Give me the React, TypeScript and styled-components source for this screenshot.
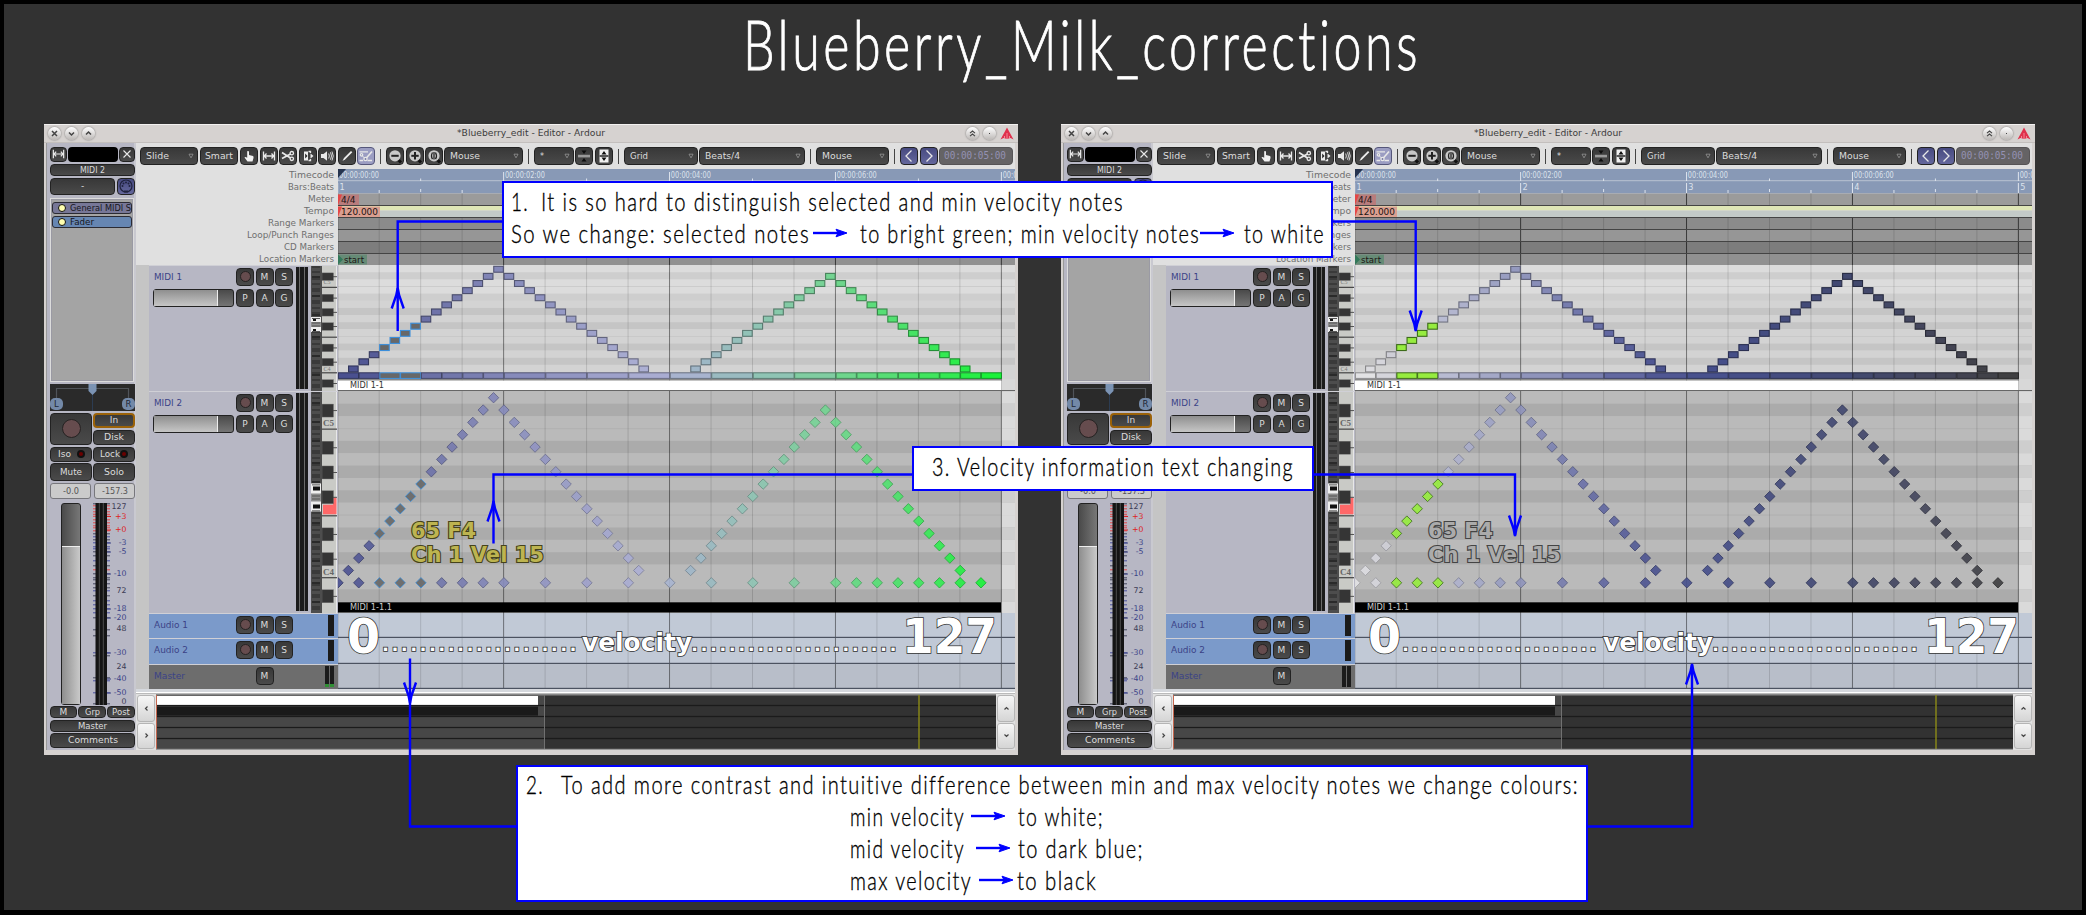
import React, { useLayoutEffect, useRef, useState } from 'react';
import styled, { createGlobalStyle, css } from 'styled-components';

const Global = createGlobalStyle`
  html, body { margin: 0; padding: 0; background: #323232; }
  * { box-sizing: border-box; }
  svg { display: block; }
`;

const UI_FONT = '"DejaVu Sans", sans-serif';
const NOTE_FONT = 'Lato, "Liberation Sans", sans-serif';
const BLUE = '#0000ff';

/* ---------- text that is condensed or widened to a known width ---------- */

const FitBox = styled.span<{ $w: number }>`
  display: block;
  flex: none;
  width: ${p => p.$w}px;
  white-space: pre;
`;
const FitInner = styled.span`
  display: inline-block;
  transform-origin: 0 50%;
`;

function Fit({ w, children }: { w: number; children: string }) {
  const ref = useRef<HTMLSpanElement>(null);
  const [scale, setScale] = useState(1);
  useLayoutEffect(() => {
    const el = ref.current;
    if (!el) return;
    el.style.transform = 'none';
    const natural = el.getBoundingClientRect().width;
    const next = natural ? w / natural : 1;
    el.style.transform = `scaleX(${next})`;
    setScale(next);
  }, [w, children]);
  return (
    <FitBox $w={w}>
      <FitInner ref={ref} style={{ transform: `scaleX(${scale})` }}>{children}</FitInner>
    </FitBox>
  );
}

/* ---------- page ---------- */

const Page = styled.main`
  position: relative;
  width: 2086px;
  height: 915px;
  overflow: hidden;
  background: #323232;
  border: 4px solid #000;
  border-bottom-width: 5px;
  display: flex;
  flex-direction: column;
`;
const Heading = styled.h1`
  margin: 0;
  height: 120px;
  padding: 0 0 0 739px;
  font: 300 69px/80px ${NOTE_FONT};
  font-variant-ligatures: none;
  letter-spacing: 0.07em;
  -webkit-text-stroke: 0.9px #fff;
  color: #fff;
`;
const Windows = styled.div`
  display: flex;
  gap: 43px;
  padding-left: 40px;
`;

/* ---------- window frame ---------- */

const Frame = styled.section`
  position: relative;
  width: 974px;
  height: 631px;
  background: #d6d2d0;
  border-top: 1px solid #f3f1f0;
  font: 9px/12px ${UI_FONT};
  color: #ddd;
  display: flex;
  flex-direction: column;
`;
const TitleBar = styled.header`
  flex: none;
  height: 18px;
  display: flex;
  align-items: center;
  justify-content: space-between;
  padding: 0 4px 1px 4px;
  color: #3c3c3c;
  border-bottom: 1px solid #c3bfbd;
`;
const TitleButtons = styled.div<{ $gap: number }>`
  width: 120px;
  display: flex;
  align-items: center;
  gap: ${p => p.$gap}px;
  &:last-child { justify-content: flex-end; }
`;
const RoundButton = styled.span`
  width: 13px;
  height: 13px;
  border-radius: 50%;
  background: linear-gradient(#fff, #bbb7b5);
  box-shadow: 0 0 2px #666;
  display: grid;
  place-items: center;
`;
const Body = styled.div`
  flex: none;
  height: 607px;
  display: flex;
  padding: 0 3px 0 2px;
`;

/* ---------- shared controls ---------- */

const dark = css`
  background: linear-gradient(#383838, #4a4a4a);
  border: 1px solid #222;
  border-radius: 4px;
  color: #dcdcdc;
`;
const Button = styled.div<{ $w?: number; $h?: number; $ml?: number; $lit?: boolean; $pad?: boolean }>`
  ${dark}
  flex: ${p => (p.$w ? 'none' : '1')};
  width: ${p => (p.$w ? `${p.$w}px` : 'auto')};
  height: ${p => p.$h ?? 18}px;
  margin-left: ${p => p.$ml ?? 0}px;
  display: flex;
  align-items: center;
  justify-content: ${p => (p.$pad ? 'space-between' : 'center')};
  padding: ${p => (p.$pad ? '0 3px 1px 5px' : '0 0 1px')};
  ${p => p.$lit && css`background: #9b9dc2; border-color: #55567a;`}
`;
const NavButton = styled(Button)`
  background: linear-gradient(#474a80, #64679c);
`;
const Separator = styled.i<{ $ml: number }>`
  flex: none;
  width: 1px;
  height: 15px;
  margin-left: ${p => p.$ml}px;
  background: #444;
`;
const RecDot = styled.i<{ $size: number }>`
  width: ${p => p.$size}px;
  height: ${p => p.$size}px;
  border-radius: 50%;
  background: #664c4e;
  border: 1px solid #262222;
`;

/* ---------- mixer strip ---------- */

const Strip = styled.aside`
  flex: none;
  width: 90px;
  padding: 4px 0 0 3px;
  background: #b7b7c4;
  border-left: 1px solid #999;
  border-right: 2px solid #c9c9d0;
  display: flex;
  flex-direction: column;
`;
const StripRow = styled.div<{ $h: number; $mt?: number; $gap?: number }>`
  flex: none;
  height: ${p => p.$h}px;
  margin-top: ${p => p.$mt ?? 0}px;
  width: 85px;
  display: flex;
  gap: ${p => p.$gap ?? 1}px;
`;
const BlackBox = styled.div`
  flex: 1;
  height: 15px;
  border-radius: 4px;
  background: #000;
`;
const Processors = styled.div`
  flex: none;
  width: 84px;
  height: 184px;
  margin-top: 3px;
  padding: 3px 1px;
  background: #a4a4a4;
  border: 1px solid #dcdcdc;
  outline: 1px solid #9a9aa4;
  outline-offset: -2px;
  display: flex;
  flex-direction: column;
  gap: 2px;
`;
const Processor = styled.div<{ $bg: string }>`
  height: 12px;
  border: 1px solid #2b2b33;
  border-radius: 3px;
  background: ${p => p.$bg};
  color: #16161c;
  display: flex;
  align-items: center;
  gap: 4px;
  padding-left: 5px;
  line-height: 10px;
`;
const Led = styled.i<{ $on?: boolean }>`
  flex: none;
  width: 8px;
  height: 8px;
  border-radius: 50%;
  border: ${p => (p.$on ? '1.5px' : '2px')} solid #111;
  background: ${p => (p.$on ? '#ffffb0' : '#6b0000')};
`;
const Halves = styled.div`
  flex: 1;
  display: flex;
  flex-direction: column;
  gap: 2px;
`;
const InButton = styled(Button)`
  border: 2px solid #9b6208;
`;
const Readout = styled.div`
  flex: 1;
  border: 1px solid #77777c;
  border-radius: 3px;
  background: #cbcbcb;
  color: #555;
  display: flex;
  justify-content: center;
  line-height: 14px;
`;
const FaderArea = styled.div`
  flex: none;
  height: 202px;
  margin-top: 4px;
  display: flex;
`;
const VFader = styled.div`
  width: 20px;
  margin-left: 11px;
  border: 1px solid #222;
  border-radius: 3px;
  background: linear-gradient(90deg, #4a4a4a, #777);
  display: flex;
  align-items: flex-end;
`;
const VFaderFill = styled.div`
  width: 100%;
  height: 158px;
  border-top: 1px solid #eee;
  background: linear-gradient(90deg, #8e8e8e, #c9c9c9);
`;

/* ---------- main column ---------- */

const Main = styled.div`
  flex: none;
  width: 879px;
  display: flex;
  flex-direction: column;
  background: #e0e0e0;
`;
const Toolbar = styled.div`
  flex: none;
  height: 26px;
  padding-left: 4px;
  display: flex;
  align-items: center;
`;
const Clock = styled.div`
  ${dark}
  flex: none;
  width: 74px;
  height: 18px;
  margin-left: 1px;
  background: #656365;
  border-color: #565456;
  color: #9492b4;
  padding: 0 0 1px 4px;
  display: flex;
  align-items: center;
  font: 10px/12px "DejaVu Sans Mono", monospace;
`;
const Rulers = styled.div`
  flex: none;
  height: 96px;
  display: flex;
`;
const RulerNames = styled.div`
  width: 202px;
  padding-right: 4px;
  display: flex;
  flex-direction: column;
  align-items: flex-end;
  color: #6f6f6f;
`;
const TrackRow = styled.div<{ $h: number }>`
  flex: none;
  height: ${p => p.$h}px;
  display: flex;
`;
const GroupTab = styled.div`
  flex: none;
  width: 13px;
  background: #c5c5c5;
`;
const Header = styled.div<{ $bg: string }>`
  flex: none;
  width: 189px;
  display: flex;
  background: ${p => p.$bg};
  border-top: 1px solid #d0d0d6;
`;
const Controls = styled.div<{ $top: number }>`
  flex: none;
  width: 147px;
  padding: ${p => p.$top}px 2px 0 5px;
  color: #3b4387;
  display: flex;
  flex-direction: column;
  gap: 3px;
`;
const ControlRow = styled.div`
  display: flex;
  align-items: center;
  height: 18px;
`;
const NameCell = styled.div`
  flex: none;
  width: 82px;
`;
const HFader = styled.div`
  flex: none;
  width: 81px;
  height: 18px;
  margin: 0 2px 0 -1px;
  border: 1px solid #222;
  border-radius: 3px;
  background: linear-gradient(#4a4a4a, #757575);
`;
const HFaderFill = styled.div`
  width: 64px;
  height: 16px;
  border-right: 1px solid #eee;
  background: linear-gradient(#8f8f8f, #c6c6c6);
`;
const Meters = styled.div<{ $n: number; $h: string; $ml: number; $sig?: boolean }>`
  flex: none;
  margin-left: ${p => p.$ml}px;
  margin-top: 1px;
  height: ${p => p.$h};
  display: flex;
  gap: 1px;
  background: #6a6a6a;
  i {
    width: ${p => (p.$n === 3 ? 3.4 : p.$n === 2 ? 4 : 6)}px;
    background: #1b1b1b;
    ${p => p.$sig && css`border-bottom: 3px solid #2f8f33;`}
  }
`;
const Lane = styled.div<{ $bg?: string }>`
  position: relative;
  flex: none;
  width: 677px;
  overflow: hidden;
  background: ${p => p.$bg ?? 'transparent'};
`;
const BottomRule = styled.div`
  flex: none;
  height: 5px;
  background: #fff;
  border-top: 3px solid #d5d8dd;
  border-bottom: 1px solid #bbb;
`;
const SummaryRow = styled.div`
  flex: none;
  height: 56px;
  display: flex;
`;
const Arrows = styled.div`
  flex: none;
  width: 19px;
  padding: 1px 0 1px 1px;
  display: flex;
  flex-direction: column;
  gap: 1px;
`;
const ArrowButton = styled.div`
  flex: 1;
  border: 1px solid #b5b5b5;
  border-radius: 3px;
  background: linear-gradient(#f6f6f6, #d5d5d5);
  display: grid;
  place-items: center;
`;
const Summary = styled.div`
  flex: none;
  width: 840px;
  background: #323232;
`;

/* ---------- legend and annotation overlays ---------- */

const Float = styled.div<{ $x: number; $y: number }>`
  position: absolute;
  left: ${p => p.$x}px;
  top: ${p => p.$y}px;
`;
const Legend = styled(Float)<{ $size: number }>`
  font: bold ${p => p.$size}px/${p => p.$size}px ${UI_FONT};
  color: #fff;
  -webkit-text-stroke: 1.6px #333;
  paint-order: stroke fill;
`;
const Dots = styled(Legend)`
  letter-spacing: 2.3px;
`;
const Info = styled(Float)<{ $fill: string; $stroke: string }>`
  font: bold 20.5px/24px ${UI_FONT};
  color: ${p => p.$fill};
  -webkit-text-stroke: 2.2px ${p => p.$stroke};
  paint-order: stroke fill;
`;
const Callout = styled.div<{ $x: number; $y: number; $w: number; $h: number; $pad: string }>`
  position: absolute;
  left: ${p => p.$x}px;
  top: ${p => p.$y}px;
  width: ${p => p.$w}px;
  height: ${p => p.$h}px;
  padding: ${p => p.$pad};
  background: #fff;
  border: 2.5px solid ${BLUE};
  color: #000;
  font: 300 25.5px/32px ${NOTE_FONT};
  font-variant-ligatures: none;
  letter-spacing: 0.07em;
  -webkit-text-stroke: 0.35px #000;
`;
const Line = styled.div<{ $indent?: number }>`
  display: flex;
  align-items: center;
  height: 32px;
  padding-left: ${p => p.$indent ?? 0}px;
`;
const Gap = styled.i<{ $w: number }>`
  flex: none;
  width: ${p => p.$w}px;
`;
const Connectors = styled.svg`
  position: absolute;
  left: -4px;
  top: -4px;
`;

/* ---------- data ---------- */

const STEP = 10.37;
const BAR = STEP * 16;
const BLACK_ROWS = [1, 4, 6, 8, 11, 13, 16];
const RISE_1 = Array.from({ length: 15 }, (_, i) => [i + 1, 14 - i]);
const FALL_1 = Array.from({ length: 14 }, (_, i) => [i + 16, i + 1]);
const RISE_2 = Array.from({ length: 14 }, (_, i) => [i + 34, 14 - i]);
const FALL_2 = Array.from({ length: 13 }, (_, i) => [i + 48, i + 2]);
const SLOPES = [...RISE_1, ...FALL_1, ...RISE_2, ...FALL_2];
const BASE = [0, 2, 4, 6, 8, 10, 12, 14, 16, 20, 24, 28, 32, 36, 40, 44, 48, 50, 52, 54, 56, 58, 60, 62];

type Stop = [number, number[]];
interface Theme {
  stops: Stop[];
  selected: string;
  selectedEdge: string;
  infoFill: string;
  infoEdge: string;
  signal: boolean;
  marks: { zero: number; dots1: number; word: number; dots2: number; max: number };
}
const OLD: Theme = {
  stops: [[0, [74, 80, 143]], [8, [107, 112, 166]], [16, [135, 139, 187]], [30, [175, 178, 213]], [34, [160, 182, 200]], [40, [143, 196, 180]], [47, [116, 212, 146]], [54, [76, 226, 106]], [62, [26, 242, 58]]],
  selected: '#686868', selectedEdge: '#3a8edb',
  infoFill: '#bdb450', infoEdge: '#45431c', signal: true,
  marks: { zero: 305, dots1: 339, word: 538, dots2: 648, max: 861 },
};
const NEW: Theme = {
  stops: [[0, [226, 226, 228]], [3, [206, 206, 214]], [8, [184, 187, 210]], [16, [143, 148, 187]], [22, [107, 113, 168]], [29, [75, 83, 143]], [34, [70, 79, 139]], [47, [66, 73, 112]], [55, [68, 70, 90]], [62, [64, 64, 66]]],
  selected: '#96ec3f', selectedEdge: '#3d6b1a',
  infoFill: '#ababab', infoEdge: '#444', signal: false,
  marks: { zero: 309, dots1: 342, word: 541.5, dots2: 652, max: 866 },
};

function shade(stops: Stop[], s: number, k = 1) {
  let i = 0;
  while (i < stops.length - 2 && stops[i + 1][0] <= s) i++;
  const [a, ca] = stops[i];
  const [b, cb] = stops[i + 1];
  const t = Math.min(1, (s - a) / (b - a));
  return `rgb(${ca.map((v, n) => Math.round((v + (cb[n] - v) * t) * k)).join(',')})`;
}

/* ---------- drawings ---------- */

function GridLines({ h, y = 0, soft }: { h: number; y?: number; soft?: boolean }) {
  const lines = [];
  for (let q = 0; q <= 16; q++) {
    const major = q % 4 === 0;
    lines.push(
      <line key={q} x1={(q * BAR) / 4 - 0.3} x2={(q * BAR) / 4 - 0.3} y1={y} y2={y + h}
        stroke="#000" strokeOpacity={major ? (soft ? 0.45 : 0.62) : 0.13} strokeWidth={1} />,
    );
  }
  return <g>{lines}</g>;
}

function bandColor(row: number, light: string, darkTone: string) {
  return BLACK_ROWS.includes(row) ? darkTone : light;
}

function RollMidi1({ theme }: { theme: Theme }) {
  const rh = 7.12;
  return (
    <svg width="677" height="126">
      <rect width="677" height="126" fill="#d8d8d8" />
      {Array.from({ length: 16 }, (_, r) => (
        <rect key={r} y={0.2 + r * rh} width="677" height={rh} fill={bandColor(r, r < 5 ? '#dcdcdc' : '#d3d3d3', r < 5 ? '#cecece' : '#c5c5c5')} />
      ))}
      <path d="M0 21.500h677M0 71.500h677" stroke="#c3c3c3" strokeWidth=".6" />
      <GridLines h={126} soft />
      {SLOPES.map(([s, r]) => {
        const sel = s >= 4 && s <= 7;
        return (
          <rect key={s} x={s * STEP + 0.2} y={0.9 + r * rh + 0.4} width={STEP - 0.8} height={rh - 1.2} strokeWidth="1.1"
            fill={sel ? theme.selected : shade(theme.stops, s)} stroke={sel ? theme.selectedEdge : shade(theme.stops, s, 0.62)} />
        );
      })}
      {BASE.map((s, i) => {
        const end = BASE[i + 1] ?? 64;
        const sel = s === 4 || s === 6;
        return (
          <rect key={`b${s}`} x={s * STEP + 0.4} y="107.800" width={(end - s) * STEP - 0.6} height="5.6" strokeWidth="1"
            fill={sel ? theme.selected : shade(theme.stops, s)} stroke={sel ? theme.selectedEdge : shade(theme.stops, s, 0.62)} />
        );
      })}
      <rect y="114.2" width="663.5" height="1.4" fill="#777" />
      <rect y="115.6" width="663.5" height="9.6" fill="#fff" />
      <rect y="125" width="677" height="1" fill="#666" />
      <text x="12" y="123.400" fontSize="8.2" fontFamily="DejaVu Sans" fill="#333" textLength="34" lengthAdjust="spacingAndGlyphs">MIDI 1-1</text>
    </svg>
  );
}

function Diamond({ s, r, theme }: { s: number; r: number; theme: Theme }) {
  const x = s * STEP;
  const y = 6.7 + r * 12.34;
  const sel = s >= 4 && s <= 8;
  return (
    <path d={`M${x} ${y - 5.2}L${x + 5.2} ${y}L${x} ${y + 5.2}L${x - 5.2} ${y}Z`} strokeWidth="1" fillOpacity=".92"
      fill={sel ? theme.selected : shade(theme.stops, s)} stroke={sel ? theme.selectedEdge : shade(theme.stops, s, 0.72)} strokeOpacity=".8" />
  );
}

function RollMidi2({ theme }: { theme: Theme }) {
  const rh = 12.38;
  return (
    <svg width="677" height="222">
      <rect width="677" height="222" fill="#bababa" />
      {Array.from({ length: 17 }, (_, r) => (
        <rect key={r} y={0.3 + r * rh} width="663.5" height={rh} fill={bandColor(r, '#bababa', '#ababab')} />
      ))}
      {Array.from({ length: 18 }, (_, r) => (
        <rect key={`e${r}`} x="663.5" y={0.3 + r * rh} width="14" height={rh} fill={bandColor(r, '#dadada', '#cecece')} />
      ))}
      <path d="M0 37.7h663M0 124h663" stroke="#aeaeae" strokeWidth=".7" />
      <GridLines h={222} soft />
      {SLOPES.map(([s, r]) => <Diamond key={s} s={s} r={r} theme={theme} />)}
      {BASE.map(s => <Diamond key={`b${s}`} s={s} r={15} theme={theme} />)}
      <rect y="211.3" width="663" height="10.2" fill="#000" />
      <text x="12" y="219.3" fontSize="8.2" fontFamily="DejaVu Sans" fill="#ccc" textLength="42" lengthAdjust="spacingAndGlyphs">MIDI 1-1.1</text>
    </svg>
  );
}

function Keyboard({ h, rh, top, hot }: { h: number; rh: number; top: number; hot?: boolean }) {
  return (
    <svg width="16" height={h}>
      <rect width="15" height={h} fill="#c9cac6" />
      <rect x="14" width="1" height={h} fill="#e8e8e8" />
      {hot && <path d={`M1 ${top + 9.1 * rh}h10v-7h3.500v16.500h-13.500z`} fill="#ff6868" />}
      {[3, 10, 15].map(r => <rect key={r} y={top + r * rh - 0.6} width="15" height="1.2" fill="#444" />)}
      {BLACK_ROWS.filter(r => top + r * rh + 6 < h).map(r => (
        <g key={r}>
          <rect y={top + (r + 0.5) * rh - (hot ? 6.5 : 3.8)} width="11.500" height={hot ? 13 : 7.6} fill="#353535" stroke="#777" strokeWidth=".4" />
          <rect x="11" y={top + (r + 0.5) * rh - 0.4} width="4" height=".9" fill="#444" />
        </g>
      ))}
      {hot ? (
        <g fontFamily="Liberation Serif" fontWeight="bold" fontSize="9" fill="#666">
          <text x="1" y={top + 3 * rh - 3}>C5</text>
          <text x="1" y={top + 15 * rh - 3}>C4</text>
        </g>
      ) : (
        <g fontFamily="Liberation Serif" fontSize="6" fill="#777">
          <text x="1.500" y={top + 2.500 * rh}>C5</text>
          <text x="1.500" y={top + 14.7 * rh}>C4</text>
        </g>
      )}
    </svg>
  );
}

function Scroomer({ h, at, span, big }: { h: number; at: number; span: number; big?: boolean }) {
  const ticks = Array.from({ length: Math.floor(h / 4) }, (_, i) => i);
  const grip = big ? 10 : 5;
  return (
    <svg width="11" height={h}>
      <rect width="11" height={h} fill="#4d4d4d" />
      {ticks.map(i => <rect key={i} x="1" y={i * 4 + (i % 3)} width="8" height="2" fill={i % 5 === 2 ? '#2a2a2a' : '#3a3a3a'} />)}
      <rect y={at} width="10" height={span} fill="#8d8d8d" />
      <rect y={at + span / 2 - 2} x="1" width="8" height="1" fill="#555" />
      <rect y={at + span / 2 + 1} x="1" width="8" height="1" fill="#555" />
      {[at, at + span - grip].map((y, i) => (
        <g key={y}>
          <rect y={y} width="10" height={grip} fill="#eee" />
          <rect x="2" y={y + (big ? 3 : 2)} width={big ? 7 : 3} height={big ? 4 : 2} fill="#111" />
          <rect x="1" y={i ? y + grip - 1 : y + 1} width="8" height=".8" fill="#333" />
        </g>
      ))}
    </svg>
  );
}

const CODES = ['00:00:00:00', '00:00:02:00', '00:00:04:00', '00:00:06:00', '00:00:08:00'];

function RulerDrawing() {
  const shades = ['#8b8b8b', '#969696', '#7d7d7d', '#919191'];
  return (
    <svg width="677" height="96">
      <rect width="677" height="24.500" fill="#8899b6" />
      <rect y="11.200" width="677" height="1" fill="#b9c2d2" />
      {CODES.map((c, i) => (
        <g key={i} fontSize="8.2" fill="#dce2ec" fontFamily="DejaVu Sans">
          <rect x={i * BAR - 0.8} y="3" width="1" height="9" fill="#dde3ec" />
          <rect x={i * BAR - 0.8} y="14" width="1" height="10" fill="#dde3ec" />
          <rect x={(i + 0.5) * BAR - 0.8} y="9.500" width="1" height="2.500" fill="#dde3ec" />
          {[1, 2, 3].map(q => <rect key={q} x={(i + q / 4) * BAR - 0.8} y={q === 2 ? 20 : 21} width="1" height="3" fill="#dde3ec" />)}
          <text x={i * BAR + 1} y="8.700" textLength="40" lengthAdjust="spacingAndGlyphs">{c}</text>
          <text x={i * BAR + 1.500} y="20.700">{i + 1}</text>
        </g>
      ))}
      <path d="M0 0H8L0 9Z" fill="#26344f" />
      <rect y="24.500" width="677" height="12.200" fill="#9b9b9b" />
      <rect y="37" width="677" height="4.500" fill="#dfe6b6" />
      <rect y="41.500" width="677" height="6.800" fill="#c3cac8" />
      {shades.map((f, i) => <rect key={f} y={48.500 + i * 12} width="677" height="12" fill={f} />)}
      <GridLines h={12} y={24.500} />
      <GridLines h={48} y={48.500} />
      {[36.5, 48.5, 60.5, 72.5, 84.5].map(y => <rect key={y} y={y - 0.5} width="677" height="1" fill="#444" />)}
      <rect y="25.500" width="21" height="10.500" fill="#b97c7c" />
      <rect y="37.500" width="42" height="10.500" fill="#da9f90" />
      <path d="M0 25.500H4L0 36ZM0 37.500H4L0 48Z" fill="#e54646" />
      <rect y="85.500" width="29" height="10" fill="#668b76" />
      <path d="M0 85.500L5 90.500L0 95.500Z" fill="#33785a" />
      <g fontFamily="DejaVu Sans" fontSize="9" fill="#1c1414">
        <text x="3" y="34" textLength="14.500" lengthAdjust="spacingAndGlyphs">4/4</text>
        <text x="3" y="46" textLength="37" lengthAdjust="spacingAndGlyphs">120.000</text>
        <text x="6" y="93.500" textLength="20" lengthAdjust="spacingAndGlyphs">start</text>
      </g>
    </svg>
  );
}

function SummaryDrawing() {
  return (
    <svg width="840" height="56">
      <rect width="388" height="56" fill="#474747" />
      <rect width="840" height="1.500" fill="#888" />
      <rect y="2" width="382" height="9" fill="#fff" />
      <rect y="12.600" width="382" height="9" fill="#1a1a1a" />
      {[11.5, 22.5, 33.5, 44.5].map(y => <rect key={y} y={y - 0.6} width="840" height="1.200" fill="#1b1b1b" />)}
      <rect x="388" y="1" width="1" height="54" fill="#707070" />
      <rect x="762.300" y="1" width="1.400" height="54" fill="#8c8a16" />
      <rect x="0" y="1" width="1" height="54" fill="#c4664e" />
      <rect y="54.800" width="840" height="1.200" fill="#999" />
    </svg>
  );
}

function Caret() {
  return <svg width="6" height="6" viewBox="0 0 6 6"><path d="M1 1.200H5L3 4.800Z" fill="#333" stroke="#999" strokeWidth=".8" /></svg>;
}

function Icon({ name }: { name: string }) {
  const s = { fill: 'none', stroke: '#e8e8e8', strokeWidth: 1.3 };
  return (
    <svg width="16" height="16" viewBox="0 0 16 16">
      {name === 'hand' && <path d="M6.200 3.300Q7.200 2.500 8 3.500V7L12 8Q12.800 8.500 12.500 10L11.500 13.500H6.500L3.500 9.500Q4 8.300 6.200 9.700Z" fill="#f2f2f2" />}
      {name === 'range' && <path d="M2.500 3.500V12.500M13.500 3.500V12.500M3 8H13M5.500 5.500L3.200 8L5.500 10.500M10.500 5.500L12.800 8L10.500 10.500" {...s} />}
      {name === 'cut' && <g {...s}><circle cx="11.800" cy="5.200" r="1.700" /><circle cx="11.800" cy="10.800" r="1.700" /><path d="M2 4.500L10.500 10M2 10.500L10.500 6" strokeWidth="1.700" /></g>}
      {name === 'stretch' && <g><path d="M4 3.500H8V12.500H4Z" fill="#eee" /><path d="M5.200 5.500L7.500 8L5.200 10.500Z" fill="#222" /><path d="M8.500 3.500H10.500V5M8.500 12.500H10.500V11" {...s} /><path d="M10.500 5.500L13.500 8L10.500 10.500Z" fill="#eee" /></g>}
      {name === 'audition' && <g><path d="M2 6H4.500L8 3.300V12.700L4.500 10H2Z" fill="#e8e8e8" /><path d="M9.700 5.500Q11 8 9.700 10.500M11.500 4.300Q13.500 8 11.500 11.700M13 3.500Q15.500 8 13 12.500" {...s} strokeWidth=".9" /></g>}
      {name === 'draw' && <path d="M3.500 13L5 10L12 3L13.300 4.300L6.300 11.300Z" fill="#eee" />}
      {name === 'edit' && <g {...s}><path d="M1.500 3.800H10M1.500 12.500H5M9.500 12.500H14" /><path d="M7.500 11L14 3.500" strokeWidth="1.600" /><path d="M3.500 7L7.500 11" strokeWidth="1" /><circle cx="7.500" cy="11" r="1.600" fill="#777aa5" /><circle cx="3.500" cy="6.800" r="1.200" fill="#777aa5" /></g>}
      {['out', 'in', 'full'].includes(name) && (
        <g>
          <path d="M10.500 11L14 14.500" stroke="#111" strokeWidth="3" />
          <circle cx="8" cy="7.800" r="5.600" fill="#c9c9c9" />
          {name !== 'full' && <path d="M4.300 7.800H11.700" stroke="#222" strokeWidth="2" />}
          {name === 'in' && <path d="M8 4V11.600" stroke="#222" strokeWidth="2" />}
          {name === 'full' && <path d="M6.500 4.500Q4.500 8 6.500 11.200M9.500 4.500Q11.500 8 9.500 11.200M8 4V11.600" stroke="#222" strokeWidth="1.300" fill="none" />}
        </g>
      )}
      {name === 'shrink' && <g><rect x="2" y="6.800" width="12" height="2.600" fill="#999" /><path d="M5.500 2.500H10.500L8 6ZM5.500 13.500H10.500L8 10Z" fill="#0d0d0d" /></g>}
      {name === 'expand' && <g><rect x="3.500" y="1.500" width="9" height="13" fill="#f0f0f0" /><rect x="3.500" y="7" width="9" height="2" fill="#555" /><path d="M5.500 6.500H10.500L8 3ZM5.500 9.500H10.500L8 13Z" fill="#0d0d0d" /></g>}
      {name === 'close' && <path d="M4 4L12 12M12 4L4 12" {...s} />}
      {name === 'prev' && <path d="M10.500 2.500L5 8L10.500 13.500" {...s} />}
      {name === 'next' && <path d="M5.500 2.500L11 8L5.500 13.500" {...s} />}
      {name === 'midi' && <g><circle cx="8" cy="8" r="6" fill="none" stroke="#20233f" strokeWidth="1.200" /><g fill="#20233f"><circle cx="4.500" cy="8" r="1" /><circle cx="11.500" cy="8" r="1" /><circle cx="8" cy="4.500" r="1" /><circle cx="5.500" cy="5.500" r="1" /><circle cx="10.500" cy="5.500" r="1" /><path d="M6 12.500h4v2h-4z" /></g></g>}
    </svg>
  );
}

function Glyph({ d, w = 1.5, color = '#444' }: { d: string; w?: number; color?: string }) {
  return <svg width="9" height="9" viewBox="0 0 9 9"><path d={d} fill="none" stroke={color} strokeWidth={w} /></svg>;
}

function Panner() {
  return (
    <svg width="85" height="27">
      <rect width="85" height="27" fill="#2a2a2a" />
      <path d="M6.500 16V4.500H78.500V16" fill="none" stroke="#50545a" strokeWidth="1.200" />
      <path d="M42.500 8V27" stroke="#2c3c52" />
      <path d="M38.500 0H46.500V7L42.500 11L38.500 7Z" fill="#7b93b4" />
      <rect y="14" width="13" height="12" rx="5" fill="#7389a8" />
      <rect x="72" y="14" width="13" height="12" rx="5" fill="#7389a8" />
      <g fontFamily="DejaVu Sans" fontSize="8.500" fill="#1c2735"><text x="4" y="23">L</text><text x="75.500" y="23">R</text></g>
    </svg>
  );
}

const SCALE: [string, number, string][] = [
  ['127', 3, '#3c3c55'], ['+3', 12.5, '#d22'], ['+0', 26, '#d22'], ['-3', 39, '#3b4387'], ['-5', 48, '#3b4387'],
  ['-10', 70, '#3b4387'], ['72', 87, '#3c3c55'], ['-18', 105, '#3b4387'], ['-20', 114, '#3b4387'], ['48', 125, '#3c3c55'],
  ['-30', 149, '#3b4387'], ['24', 163, '#3c3c55'], ['-40', 175, '#3b4387'], ['-50', 189, '#3b4387'], ['0', 198, '#3c3c55'],
];

function MeterScale() {
  const ticks = [0, 2, 5, 8, 10.5, 12.5, 16, 19, 22, 24, 27, 30, 33, 36, 39, 43, 45, 48, 52, 57, 62, 66, 70, 74, 76, 80, 84, 87, 92, 97, 101, 105, 109, 114, 126, 132, 149, 152, 174, 177, 189, 200];
  return (
    <svg width="54" height="202">
      {ticks.map(t => {
        const red = (t > 1 && t < 29) || t === 66;
        return <path key={t} d={`M12 ${t + 0.8}h4M26 ${t + 0.8}h3`} stroke={red ? '#e0484c' : t % 2 ? '#4b52a0' : '#44465e'} strokeWidth="1" />;
      })}
      <rect x="14.500" width="11.500" height="202" fill="#141414" />
      <path d="M18.300 0V202M22.300 0V202" stroke="#5c5c5c" strokeWidth=".8" />
      {SCALE.map(([t, y, c]) => (
        <g key={t}>
          {t.length > 1 && /[-+]/.test(t) && <path d={`M26 ${y + 1}h4`} stroke={c} />}
          <text x="45.500" y={y + 3.300} textAnchor="end" fontFamily="DejaVu Sans" fontSize="7.800" fill={c}>{t}</text>
        </g>
      ))}
    </svg>
  );
}

/* ---------- window parts ---------- */

function MixerStrip() {
  return (
    <Strip>
      <StripRow $h={16}>
        <Button $w={17} $h={15}><Icon name="range" /></Button>
        <BlackBox />
        <Button $w={16} $h={15}><Icon name="close" /></Button>
      </StripRow>
      <StripRow $h={12} $mt={1}><Button $h={12}><Fit w={25}>MIDI 2</Fit></Button></StripRow>
      <StripRow $h={17} $mt={2} $gap={2}>
        <Button $h={17}>-</Button>
        <NavButton $w={18} $h={17}><Icon name="midi" /></NavButton>
      </StripRow>
      <Processors>
        <Processor $bg="#777797"><Led $on /><Fit w={61}>General MIDI S</Fit></Processor>
        <Processor $bg="#6686b2"><Led $on /><Fit w={24}>Fader</Fit></Processor>
      </Processors>
      <StripRow $h={27} $mt={2}><Panner /></StripRow>
      <StripRow $h={32} $mt={2}>
        <Button $w={42} $h={32}><RecDot $size={19} /></Button>
        <Halves>
          <InButton $h={15}>In</InButton>
          <Button $h={15}><Fit w={20}>Disk</Fit></Button>
        </Halves>
      </StripRow>
      <StripRow $h={15} $mt={2}>
        <Button $w={42} $h={15}><Fit w={13}>Iso</Fit><Gap $w={6} /><Led /></Button>
        <Button $h={15}><Fit w={20}>Lock</Fit><Led /></Button>
      </StripRow>
      <StripRow $h={18} $mt={1}>
        <Button $w={42}><Fit w={22}>Mute</Fit></Button>
        <Button><Fit w={20}>Solo</Fit></Button>
      </StripRow>
      <StripRow $h={16} $mt={2} $gap={3}><Readout><Fit w={16}>-0.0</Fit></Readout><Readout><Fit w={26}>-157.3</Fit></Readout></StripRow>
      <FaderArea><VFader><VFaderFill /></VFader><MeterScale /></FaderArea>
      <StripRow $h={12} $mt={1}><Button $w={27} $h={12}>M</Button><Button $w={28} $h={12}><Fit w={15}>Grp</Fit></Button><Button $h={12}><Fit w={18}>Post</Fit></Button></StripRow>
      <StripRow $h={12} $mt={2}><Button $h={12}><Fit w={29}>Master</Fit></Button></StripRow>
      <StripRow $h={15} $mt={1}><Button $h={15}><Fit w={50}>Comments</Fit></Button></StripRow>
    </Strip>
  );
}

function Dropdown({ w, ml, tw, label }: { w: number; ml: number; tw: number; label: string }) {
  return <Button $w={w} $ml={ml} $pad><Fit w={tw}>{label}</Fit><Caret /></Button>;
}

function EditorToolbar() {
  return (
    <Toolbar>
      <Dropdown w={58} ml={0} tw={23} label="Slide" />
      <Button $w={38} $ml={2}><Fit w={28}>Smart</Fit></Button>
      {['hand', 'range', 'cut', 'stretch', 'audition', 'draw'].map((n, i) => (
        <Button key={n} $w={18} $ml={i === 0 ? 2 : 1.5}><Icon name={n} /></Button>
      ))}
      <Button $w={18} $ml={1.5} $lit><Icon name="edit" /></Button>
      <Separator $ml={5} />
      <Button $w={18} $ml={5}><Icon name="out" /></Button>
      <Button $w={18} $ml={2}><Icon name="in" /></Button>
      <Button $w={18} $ml={1}><Icon name="full" /></Button>
      <Dropdown w={79} ml={1} tw={30} label="Mouse" />
      <Separator $ml={5} />
      <Dropdown w={40} ml={5} tw={4} label="*" />
      <Button $w={18} $ml={1}><Icon name="shrink" /></Button>
      <Button $w={18} $ml={1.5}><Icon name="expand" /></Button>
      <Separator $ml={5.5} />
      <Dropdown w={74} ml={5} tw={18} label="Grid" />
      <Dropdown w={106} ml={1} tw={35} label="Beats/4" />
      <Separator $ml={5} />
      <Dropdown w={73} ml={5} tw={30} label="Mouse" />
      <Separator $ml={5} />
      <NavButton $w={18} $ml={5}><Icon name="prev" /></NavButton>
      <NavButton $w={18} $ml={2}><Icon name="next" /></NavButton>
      <Clock><Fit w={62}>00:00:05:00</Fit></Clock>
    </Toolbar>
  );
}

const RULER_NAMES: [string, number][] = [
  ['Timecode', 45], ['Bars:Beats', 46], ['Meter', 26], ['Tempo', 30], ['Range Markers', 66],
  ['Loop/Punch Ranges', 87], ['CD Markers', 50], ['Location Markers', 75],
];

function MidiHeader({ name, h, top }: { name: string; h: number; top: number }) {
  const second = name === 'MIDI 2';
  return (
    <Header $bg="#b7b7c4">
      <Controls $top={top}>
        <ControlRow>
          <NameCell><Fit w={28}>{name}</Fit></NameCell>
          <Button $w={18}><RecDot $size={11} /></Button>
          <Button $w={18} $ml={1.5}>M</Button>
          <Button $w={18} $ml={1.5}>S</Button>
        </ControlRow>
        <ControlRow>
          <HFader><HFaderFill /></HFader>
          <Button $w={18}>P</Button>
          <Button $w={18} $ml={1.5}>A</Button>
          <Button $w={18} $ml={1.5}>G</Button>
        </ControlRow>
      </Controls>
      <Meters $n={3} $h={`${h - 4}px`} $ml={0}><i /><i /><i /></Meters>
      <Gap $w={3} />
      <Scroomer h={h - 1} at={second ? 91.5 : 51} span={second ? 28 : 15} big={second} />
      <Keyboard h={h - 1} rh={second ? 12.38 : 7.12} top={second ? 0 : 0} hot={second} />
    </Header>
  );
}

function AudioHeader({ name, w, master, signal }: { name: string; w: number; master?: boolean; signal?: boolean }) {
  return (
    <Header $bg={master ? '#6d6d6d' : '#7b9aca'}>
      <Controls $top={2}>
        <ControlRow>
          <NameCell><Fit w={w}>{name}</Fit></NameCell>
          {master ? <Gap $w={18} /> : <Button $w={18}><RecDot $size={11} /></Button>}
          <Button $w={18} $ml={1.5}>M</Button>
          {!master && <Button $w={18} $ml={1.5}>S</Button>}
        </ControlRow>
      </Controls>
      <Meters $n={master ? 2 : 1} $h="21px" $ml={master ? 29 : 32} $sig={master && signal}><i />{master && <i />}</Meters>
    </Header>
  );
}

function AudioLane({ h, bg }: { h: number; bg: string }) {
  return (
    <Lane $bg={bg}>
      <svg width="677" height={h}>
        <GridLines h={h} soft />
        <rect y={h - 1.2} width="677" height="1.200" fill="#4b5260" />
      </svg>
    </Lane>
  );
}

const dots = (n: number) => '.'.repeat(n);

function EditorWindow({ theme }: { theme: Theme }) {
  const m = theme.marks;
  return (
    <Frame>
      <TitleBar>
        <TitleButtons $gap={4}>
          <RoundButton><Glyph d="M2 2L7 7M7 2L2 7" /></RoundButton>
          <RoundButton><Glyph d="M2 3.500L4.500 6L7 3.500" /></RoundButton>
          <RoundButton><Glyph d="M2 5.500L4.500 3L7 5.500" /></RoundButton>
        </TitleButtons>
        <Fit w={148}>*Blueberry_edit - Editor - Ardour</Fit>
        <TitleButtons $gap={4}>
          <RoundButton><Glyph d="M2 4.200L4.500 2L7 4.200M2 7.200L4.500 5L7 7.200" w={1.1} /></RoundButton>
          <RoundButton><Glyph d="M4 4.500H5" w={1} /></RoundButton>
          <svg width="14" height="13" viewBox="0 0 14 13"><path d="M7 .5L13.500 12.500L10.500 11L7 12L3.500 11L.5 12.500Z" fill="#e0304c" /><path d="M7 6V12M4.500 9V11.500M9.500 9V11.500" stroke="#f6b0b8" strokeWidth=".7" /></svg>
        </TitleButtons>
      </TitleBar>
      <Body>
        <MixerStrip />
        <Main>
          <EditorToolbar />
          <Rulers>
            <RulerNames>{RULER_NAMES.map(([t, w]) => <Fit key={t} w={w}>{t}</Fit>)}</RulerNames>
            <Lane><RulerDrawing /></Lane>
          </Rulers>
          <TrackRow $h={126}><GroupTab /><MidiHeader name="MIDI 1" h={126} top={2} /><Lane><RollMidi1 theme={theme} /></Lane></TrackRow>
          <TrackRow $h={222}><GroupTab /><MidiHeader name="MIDI 2" h={222} top={2} /><Lane><RollMidi2 theme={theme} /></Lane></TrackRow>
          <TrackRow $h={25}><GroupTab /><AudioHeader name="Audio 1" w={34} /><AudioLane h={25} bg="#c1c9d6" /></TrackRow>
          <TrackRow $h={26}><GroupTab /><AudioHeader name="Audio 2" w={34} /><AudioLane h={26} bg="#c1c9d6" /></TrackRow>
          <TrackRow $h={25}><GroupTab /><AudioHeader name="Master" w={31} master signal={theme.signal} /><AudioLane h={25} bg="#b8bec9" /></TrackRow>
          <BottomRule />
          <SummaryRow>
            <Arrows><ArrowButton><Glyph d="M5.500 2.500L3.500 4.500L5.500 6.500" w={1.2} /></ArrowButton><ArrowButton><Glyph d="M3.500 2.500L5.500 4.500L3.500 6.500" w={1.2} /></ArrowButton></Arrows>
            <Gap $w={1} />
            <Summary><SummaryDrawing /></Summary>
            <Arrows><ArrowButton><Glyph d="M2.500 5.500L4.500 3.500L6.500 5.500" w={1.2} /></ArrowButton><ArrowButton><Glyph d="M2.500 3.500L4.500 5.500L6.500 3.500" w={1.2} /></ArrowButton></Arrows>
          </SummaryRow>
        </Main>
      </Body>
      <Info $x={366.5} $y={393.5} $fill={theme.infoFill} $stroke={theme.infoEdge}>
        <Fit w={65}>65 F4</Fit>
        <Fit w={133}>Ch 1 Vel 15</Fit>
      </Info>
      <Legend $x={m.zero - 2} $y={486.5} $size={48}><Fit w={33}>0</Fit></Legend>
      <Dots $x={m.dots1 - 1} $y={511} $size={18}><Fit w={197}>{dots(21)}</Fit></Dots>
      <Legend $x={m.word} $y={505.5} $size={24}><Fit w={110}>velocity</Fit></Legend>
      <Dots $x={m.dots2 - 1} $y={511} $size={18}><Fit w={208}>{dots(22)}</Fit></Dots>
      <Legend $x={m.max - 3} $y={486.5} $size={48}><Fit w={95}>127</Fit></Legend>
    </Frame>
  );
}

function InlineArrow({ w }: { w: number }) {
  return (
    <svg width={w} height="12">
      <path d={`M0 6H${w - 8}`} stroke={BLUE} strokeWidth="2.400" />
      <path d={`M${w} 6L${w - 11} 2.200L${w - 9} 6L${w - 11} 9.800Z`} fill={BLUE} stroke={BLUE} strokeWidth="1" />
    </svg>
  );
}

function Head({ x, y, up }: { x: number; y: number; up?: boolean }) {
  const d = up ? 1 : -1;
  return <path d={`M${x - 6} ${y + d * 20.5}L${x} ${y + d * 3}L${x + 6} ${y + d * 20.5}M${x - 2} ${y + d * 10}L${x} ${y}L${x + 2} ${y + d * 10}`} />;
}

export default function App() {
  return (
    <Page>
      <Global />
      <Heading><Fit w={678}>Blueberry_Milk_corrections</Fit></Heading>
      <Windows>
        <EditorWindow theme={OLD} />
        <EditorWindow theme={NEW} />
      </Windows>
      <Connectors width="2086" height="915" fill="none" stroke={BLUE} strokeWidth="2.400">
        <path d="M502 221.500H397.700V331" />
        <Head x={397.7} y={288} up />
        <path d="M1330 221.500H1415.700V330" />
        <Head x={1415.7} y={331} />
        <path d="M912 474.500H493.500V543.500" />
        <Head x={493.5} y={501} up />
        <path d="M1314 474.500H1515V535" />
        <Head x={1515} y={536} />
        <path d="M516 826.500H410V658.500" />
        <Head x={410} y={703} />
        <path d="M1586 826.500H1692V665" />
        <Head x={1692} y={664} up />
      </Connectors>
      <Callout $x={497.5} $y={177} $w={831} $h={76.5} $pad="2px 0 0 7px">
        <Line><Fit w={18}>1.</Fit><Gap $w={12} /><Fit w={583}>It is so hard to distinguish selected and min velocity notes</Fit></Line>
        <Line>
          <Fit w={299}>So we change: selected notes</Fit><Gap $w={3} /><InlineArrow w={34} /><Gap $w={13} />
          <Fit w={340}>to bright green; min velocity notes</Fit><InlineArrow w={34} /><Gap $w={10} /><Fit w={81}>to white</Fit>
        </Line>
      </Callout>
      <Callout $x={511.5} $y={761} $w={1072} $h={137} $pad="1px 0 0 8px">
        <Line><Fit w={18}>2.</Fit><Gap $w={17} /><Fit w={1018}>To add more contrast and intuitive difference between min and max velocity notes we change colours:</Fit></Line>
        <Line $indent={324}><Fit w={115}>min velocity</Fit><Gap $w={6} /><InlineArrow w={34} /><Gap $w={13} /><Fit w={86}>to white;</Fit></Line>
        <Line $indent={324}><Fit w={115}>mid velocity</Fit><Gap $w={11} /><InlineArrow w={34} /><Gap $w={8} /><Fit w={126}>to dark blue;</Fit></Line>
        <Line $indent={324}><Fit w={122}>max velocity</Fit><Gap $w={7} /><InlineArrow w={34} /><Gap $w={4} /><Fit w={80}>to black</Fit></Line>
      </Callout>
      <Callout $x={908} $y={441.5} $w={402} $h={45.5} $pad="2px 0 0 18px">
        <Line><Fit w={362}>3. Velocity information text changing</Fit></Line>
      </Callout>
    </Page>
  );
}
